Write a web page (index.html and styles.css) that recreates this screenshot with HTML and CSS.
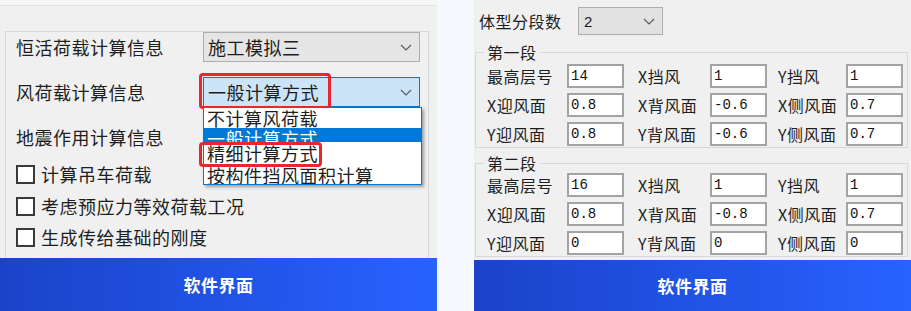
FILE: index.html
```html
<!DOCTYPE html>
<html lang="zh-CN">
<head>
    <meta charset="UTF-8">
    <meta name="viewport" content="width=device-width, initial-scale=1.0">
    <title>软件界面</title>
    <link rel="stylesheet" href="styles.css">
</head>
<body>
    <div class="page">
        <!-- 左侧：荷载计算信息 -->
        <section class="panel">
            <div class="screen screen-left">
                <div class="top-strip"></div>
                <div class="group">
                    <div class="field-row">
                        <span class="field-label">恒活荷载计算信息</span>
                        <div class="combo">
                            <span>施工模拟三</span>
                            <svg class="chevron" width="12" height="7" viewBox="0 0 12 7"><polyline points="1,1 6,6 11,1"/></svg>
                        </div>
                    </div>
                    <div class="field-row">
                        <span class="field-label">风荷载计算信息</span>
                        <div class="combo combo-open">
                            <span>一般计算方式</span>
                            <svg class="chevron" width="12" height="7" viewBox="0 0 12 7"><polyline points="1,1 6,6 11,1"/></svg>
                            <div class="mark mark-combo"></div>
                            <div class="dropdown">
                                <div class="option option-first">不计算风荷载</div>
                                <div class="option option-selected">一般计算方式</div>
                                <div class="option option-marked">精细计算方式</div>
                                <div class="option option-last">按构件挡风面积计算</div>
                                <div class="mark mark-option"></div>
                            </div>
                        </div>
                    </div>
                    <div class="field-row">
                        <span class="field-label">地震作用计算信息</span>
                    </div>
                    <div class="check-list">
                        <label class="check-row"><span class="checkbox"></span>计算吊车荷载</label>
                        <label class="check-row"><span class="checkbox"></span>考虑预应力等效荷载工况</label>
                        <label class="check-row"><span class="checkbox"></span>生成传给基础的刚度</label>
                    </div>
                </div>
            </div>
            <div class="banner">软件界面</div>
        </section>

        <!-- 右侧：体型分段参数 -->
        <section class="panel">
            <div class="screen screen-right">
                <div class="seg-row">
                    <span class="seg-label">体型分段数</span>
                    <div class="combo combo-small">
                        <span>2</span>
                        <svg class="chevron" width="12" height="7" viewBox="0 0 12 7"><polyline points="1,1 6,6 11,1"/></svg>
                    </div>
                </div>

                <fieldset class="segment">
                    <legend>第一段</legend>
                    <div class="param-grid">
                        <span class="param-label">最高层号</span><span class="edit">14</span>
                        <span class="param-label">X挡风</span><span class="edit">1</span>
                        <span class="param-label">Y挡风</span><span class="edit">1</span>
                        <span class="param-label">X迎风面</span><span class="edit">0.8</span>
                        <span class="param-label">X背风面</span><span class="edit">-0.6</span>
                        <span class="param-label">X侧风面</span><span class="edit">0.7</span>
                        <span class="param-label">Y迎风面</span><span class="edit">0.8</span>
                        <span class="param-label">Y背风面</span><span class="edit">-0.6</span>
                        <span class="param-label">Y侧风面</span><span class="edit">0.7</span>
                    </div>
                </fieldset>

                <fieldset class="segment segment-second">
                    <legend>第二段</legend>
                    <div class="param-grid">
                        <span class="param-label">最高层号</span><span class="edit">16</span>
                        <span class="param-label">X挡风</span><span class="edit">1</span>
                        <span class="param-label">Y挡风</span><span class="edit">1</span>
                        <span class="param-label">X迎风面</span><span class="edit">0.8</span>
                        <span class="param-label">X背风面</span><span class="edit">-0.8</span>
                        <span class="param-label">X侧风面</span><span class="edit">0.7</span>
                        <span class="param-label">Y迎风面</span><span class="edit">0</span>
                        <span class="param-label">Y背风面</span><span class="edit">0</span>
                        <span class="param-label">Y侧风面</span><span class="edit">0</span>
                    </div>
                </fieldset>
            </div>
            <div class="banner banner-right">软件界面</div>
        </section>
    </div>
</body>
</html>
```

FILE: styles.css
```css
body {
    margin: 0;
    padding: 0;
    background-color: #f5f9ff;
    font-family: "Noto Sans CJK SC", "Noto Sans", sans-serif;
    color: #1e1e1e;
}

.page {
    display: flex;
    gap: 37px;
    width: 911px;
    height: 311px;
    overflow: hidden;
}

.panel {
    width: 437px;
    display: flex;
    flex-direction: column;
}

.screen {
    background-color: #f0f0f0;
    position: relative;
}

.screen-left {
    height: 258px;
    overflow: hidden;
}

.screen-right {
    height: 260px;
    padding-left: 1px;
    box-sizing: border-box;
}

.banner {
    height: 53px;
    display: flex;
    justify-content: center;
    align-items: center;
    background: linear-gradient(90deg, #1a43c9, #2862ff);
    color: white;
    font-weight: 700;
    font-size: 17px;
    letter-spacing: 0.5px;
}

.banner-right {
    height: 51px;
}

/* Left screen */
.top-strip {
    height: 5px;
    background-color: #f6f6f6;
    border-bottom: 1px solid #e2e2e2;
}

.group {
    margin: 25px 8px 0 5px;
    border: 1px solid #d7d7d7;
    border-bottom: none;
    height: 240px;
    padding-left: 10px;
}

.field-row {
    display: flex;
    align-items: center;
    height: 30px;
    margin-bottom: 15px;
}

.field-label {
    width: 187px;
    font-size: 18px;
    letter-spacing: 0.5px;
    line-height: 30px;
}

.combo {
    position: relative;
    box-sizing: border-box;
    width: 217px;
    height: 30px;
    display: flex;
    align-items: center;
    justify-content: space-between;
    padding: 0 7px 0 4px;
    background-color: #e5e5e5;
    border: 1px solid #adadad;
    font-size: 18px;
    letter-spacing: 0.5px;
}

.chevron {
    fill: none;
    stroke: #5a5a5a;
    stroke-width: 1.2;
}

.combo-open {
    background-color: #cce4f7;
    border-color: #0078d7;
}

.mark {
    position: absolute;
    box-sizing: border-box;
    border: 3px solid #e8262b;
    border-radius: 4px;
    pointer-events: none;
}

.mark-combo {
    left: -5px;
    top: -5px;
    width: 132px;
    height: 36px;
}

.dropdown {
    position: absolute;
    left: -1px;
    top: 29px;
    width: 217px;
    background-color: white;
    border: 1px solid #0078d7;
    box-shadow: 2px 2px 3px rgba(0, 0, 0, 0.35);
    z-index: 5;
}

.option {
    overflow: hidden;
    padding-left: 3px;
    line-height: 20px;
    white-space: nowrap;
}

.option-first {
    height: 20px;
}

.option-selected {
    height: 14px;
    background-color: #0078d7;
    color: white;
}

.option-marked {
    height: 23px;
    line-height: 23px;
}

.option-last {
    height: 19px;
}

.mark-option {
    left: -5px;
    top: 34px;
    width: 123px;
    height: 25px;
}

.check-list {
    display: flex;
    flex-direction: column;
    gap: 2px;
    margin-top: -8px;
}

.check-row {
    display: flex;
    align-items: center;
    height: 30px;
    font-size: 18px;
    letter-spacing: 0.5px;
}

.check-row:nth-child(3) {
    margin-top: -1px;
}

.checkbox {
    width: 19px;
    height: 19px;
    box-sizing: border-box;
    border: 2px solid #3a3a3a;
    background-color: white;
    margin-right: 6px;
}

/* Right screen */
.seg-row {
    display: flex;
    align-items: center;
    height: 28px;
    margin-top: 7px;
    padding-left: 4px;
}

.seg-label {
    width: 99px;
    font-size: 16px;
    letter-spacing: 0.5px;
}

.combo-small {
    width: 85px;
    height: 28px;
    background-color: #e1e1e1;
    font-family: "Liberation Sans", sans-serif;
    font-size: 15px;
    padding-left: 5px;
}

.segment {
    margin: 7px 3px 0 0;
    padding: 2px 0 1px 11px;
    border: 1px solid #d9d9d9;
    min-inline-size: 0;
}

.segment-second {
    margin-top: 5px;
    padding-top: 0;
}

.segment legend {
    font-size: 16px;
    line-height: 20px;
    letter-spacing: 0.5px;
    padding: 0 3px;
    margin-left: -3px;
}

.param-grid {
    display: grid;
    grid-template-columns: 80px 57px 86px 57px 79px 57px;
    grid-auto-rows: 24px;
    row-gap: 5px;
}

.param-label {
    font-size: 16px;
    line-height: 24px;
    letter-spacing: 0.5px;
    white-space: nowrap;
}

.param-label:nth-child(6n+3) {
    padding-left: 14px;
}

.param-label:nth-child(6n+5) {
    padding-left: 11px;
}

.edit {
    box-sizing: border-box;
    height: 24px;
    border: 2px solid #a3a3a3;
    background-color: white;
    padding-left: 2px;
    font-family: "Liberation Mono", monospace;
    font-size: 14px;
    line-height: 20px;
    color: #111;
}
```
